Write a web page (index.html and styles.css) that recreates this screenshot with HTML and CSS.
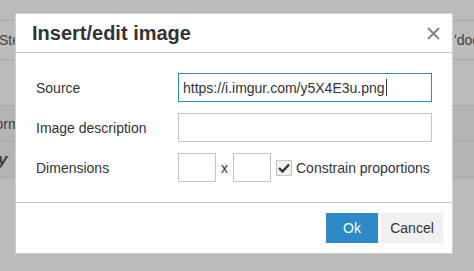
FILE: index.html
```html
<!DOCTYPE html>
<html lang="en">

<head>
    <meta charset="UTF-8">
    <meta name="viewport" content="width=device-width, initial-scale=1.0">
    <title>Insert/edit image</title>
    <link rel="stylesheet" href="styles.css">
</head>

<body>
    <div class="page">
        <div class="page-row row-top"></div>
        <div class="page-row row-steps">
            <span class="cell-left">Steps</span>
            <span class="cell-right">'doc'</span>
        </div>
        <div class="page-row row-empty"></div>
        <div class="page-row row-form">
            <span class="cell-left form-text">Form</span>
        </div>
        <div class="page-row row-tools">
            <span class="cell-left tool-y">y</span>
        </div>
        <div class="page-row row-rest"></div>
    </div>

    <!-- modal over the page -->
    <div class="dialog">
        <div class="dialog-head">
            <h1 class="dialog-title">Insert/edit image</h1>
            <div class="close-btn">
                <svg width="13" height="13" viewBox="0 0 13 13">
                    <path d="M1 1 L12 12 M12 1 L1 12" stroke="#858585" stroke-width="2" fill="none" />
                </svg>
            </div>
        </div>

        <div class="dialog-body">
            <div class="form-row">
                <label class="form-label">Source</label>
                <div class="text-field focused">https://i.imgur.com/y5X4E3u.png<span class="caret"></span></div>
            </div>
            <div class="form-row">
                <label class="form-label">Image description</label>
                <div class="text-field"></div>
            </div>
            <div class="form-row">
                <label class="form-label">Dimensions</label>
                <div class="dims">
                    <div class="text-field small"></div>
                    <span class="times">x</span>
                    <div class="text-field small"></div>
                    <span class="check">
                        <svg width="12" height="10" viewBox="0 0 12 10">
                            <path d="M1 5 L4.5 8.5 L11 1.5" stroke="#333" stroke-width="2.4" fill="none" />
                        </svg>
                    </span>
                    <span class="check-label">Constrain proportions</span>
                </div>
            </div>
        </div>

        <div class="dialog-foot">
            <div class="btn btn-primary">Ok</div>
            <div class="btn btn-cancel">Cancel</div>
        </div>
    </div>
</body>

</html>
```

FILE: styles.css
```css
* {
    box-sizing: border-box;
    margin: 0;
    padding: 0;
    font-family: 'Liberation Sans', Arial, sans-serif;
    color: #333;
}

body {
    width: 474px;
    height: 271px;
    overflow: hidden;
    position: relative;
    background: #bbbbbb;
}

.page {
    display: flex;
    flex-direction: column;
}

.page-row {
    border-bottom: 1px solid #a8a8a8;
    display: flex;
    align-items: center;
    justify-content: space-between;
    font-size: 14px;
}

.row-top {
    height: 21px;
}

.row-steps {
    height: 39px;
}

.row-empty {
    height: 46px;
}

.row-form {
    height: 36px;
    background: #b4b4b4;
}

.row-tools {
    height: 36px;
    background: #b4b4b4;
}

.row-rest {
    border-bottom: none;
}

.cell-left {
    color: #3f3f3f;
    margin-left: -1px;
}

.cell-right {
    color: #3f3f3f;
    margin-right: -8px;
}

.form-text {
    margin-left: -13px;
}

.tool-y {
    font-weight: bold;
    font-style: italic;
    font-size: 17px;
    margin-left: -2px;
}

.dialog {
    position: absolute;
    left: 15px;
    top: 13px;
    width: 438px;
    height: 241px;
    background: #fff;
    border: 1px solid #cfcfcf;

    display: flex;
    flex-direction: column;
}

.dialog-head {
    height: 39px;
    border-bottom: 1px solid #c5c5c5;
    padding: 0 12px 0 16px;

    display: flex;
    align-items: center;
    justify-content: space-between;
}

.dialog-title {
    font-size: 20px;
    font-weight: bold;
    color: #333;
}

.close-btn {
    width: 13px;
    height: 13px;
    display: flex;
}

.dialog-body {
    padding: 20px 20px 20px 20px;
    border-bottom: 1px solid #c5c5c5;

    display: flex;
    flex-direction: column;
    gap: 11px;
}

.form-row {
    display: flex;
    align-items: center;
}

.form-label {
    width: 142px;
    font-size: 14px;
}

.text-field {
    width: 254px;
    height: 29px;
    border: 1px solid #c5c5c5;
    font-size: 14px;
    padding-left: 4px;

    display: flex;
    align-items: center;
}

.text-field.focused {
    border-color: #2d8ac7;
}

.caret {
    width: 1px;
    height: 17px;
    background: #333;
    margin-left: 1px;
}

.dims {
    display: flex;
    align-items: center;
}

.text-field.small {
    width: 38px;
}

.times {
    font-size: 14px;
    width: 17px;
    text-align: center;
}

.check {
    width: 16px;
    height: 16px;
    margin-left: 5px;
    border: 1px solid #c5c5c5;
    background: #f0f0f0;

    display: flex;
    align-items: center;
    justify-content: center;
}

.check-label {
    font-size: 14px;
    margin-left: 4px;
}

.dialog-foot {
    flex: 1;
    padding: 0 9px 0 0;

    display: flex;
    align-items: center;
    justify-content: flex-end;
    gap: 3px;
}

.btn {
    height: 30px;
    background: #f0f0f0;
    font-size: 14px;

    display: flex;
    align-items: center;
    justify-content: center;
}

.btn-primary {
    width: 52px;
    background: #2d8ac7;
    color: #fff;
}

.btn-cancel {
    width: 62px;
}
```
